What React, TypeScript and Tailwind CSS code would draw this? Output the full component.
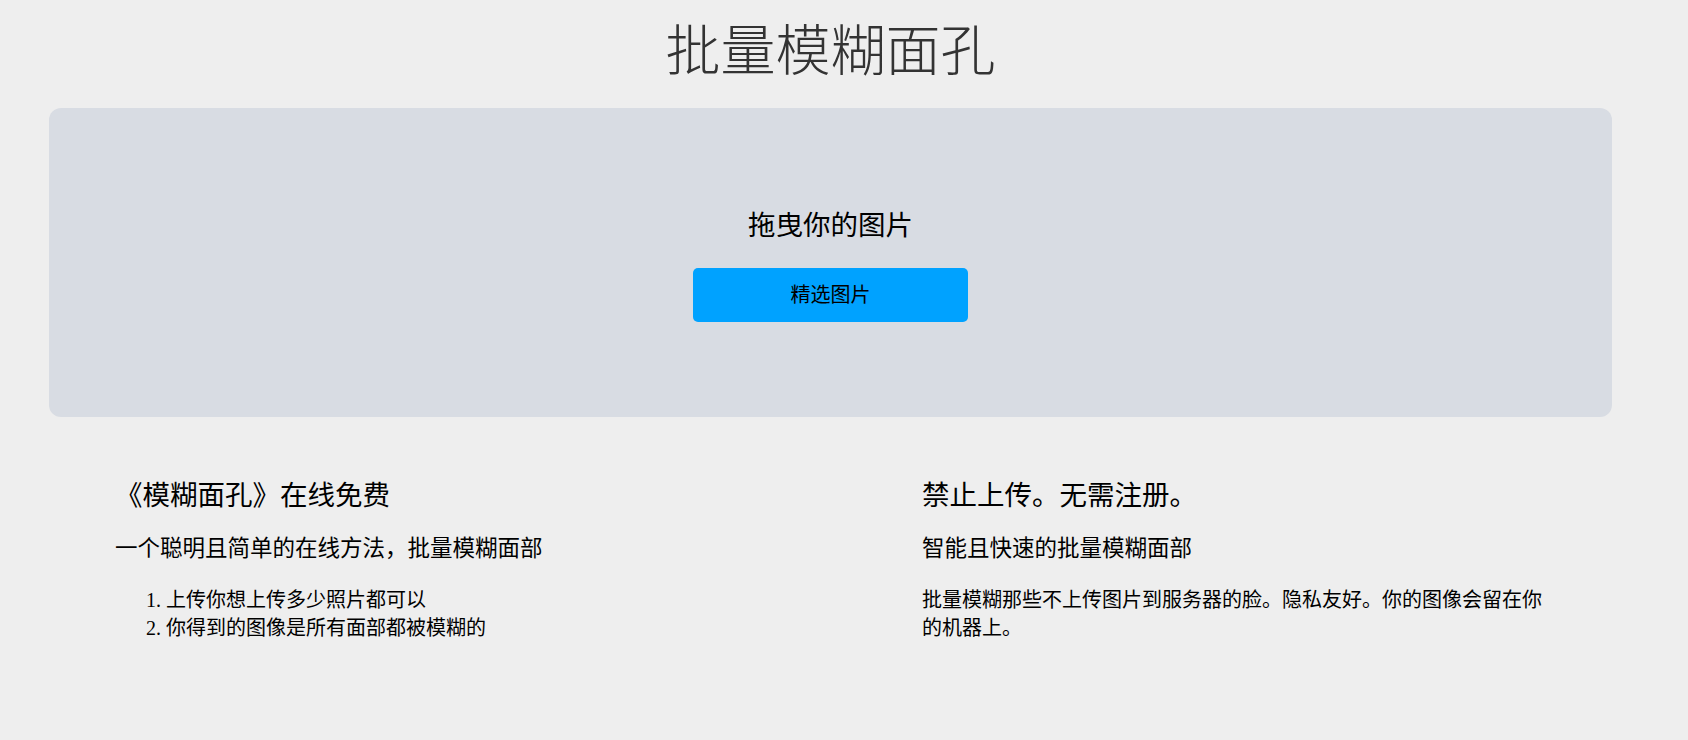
import React from 'react';

const body = '"Liberation Serif", "Noto Sans CJK SC", serif';

const App: React.FC = () => {
  return (
    <div className="min-h-[740px] w-full bg-[#eeeeee] text-black" style={{ fontFamily: body }}>
      <div className="ml-[49px] w-[1563px]">
        {/* Page title */}
        <h1
          className="pt-[13px] text-center text-[55px] font-light leading-[66px] text-[#333333]"
          style={{ fontFamily: '"Noto Sans CJK SC", sans-serif' }}
        >
          批量模糊面孔
        </h1>

        {/* Drop zone */}
        <div className="mt-[29px] flex h-[309px] flex-col items-center justify-center rounded-xl bg-[#d8dce3] pt-[6px]">
          <p className="text-[27.5px] leading-[32px]">拖曳你的图片</p>
          <button className="mt-[26px] h-[54px] w-[275px] rounded-[5px] bg-[#00a2ff] text-[20px] text-black">
            精选图片
          </button>
        </div>
      </div>

      {/* Info columns */}
      <div className="mt-[63px] flex">
        <div className="ml-[115px] w-[807px]">
          <h2 className="text-[27.5px] leading-[32px]">《模糊面孔》在线免费</h2>
          <h3 className="mt-[23px] text-[22.5px] leading-[28px]">一个聪明且简单的在线方法，批量模糊面部</h3>
          <ol className="mt-[23px] list-decimal pl-[51px] text-[20px] leading-[28px]">
            <li>上传你想上传多少照片都可以</li>
            <li>你得到的图像是所有面部都被模糊的</li>
          </ol>
        </div>
        <div className="w-[630px]">
          <h2 className="text-[27.5px] leading-[32px]">禁止上传。无需注册。</h2>
          <h3 className="mt-[23px] text-[22.5px] leading-[28px]">智能且快速的批量模糊面部</h3>
          <p className="mt-[23px] text-[20px] leading-[28px]">
            批量模糊那些不上传图片到服务器的脸。隐私友好。你的图像会留在你的机器上。
          </p>
        </div>
      </div>
    </div>
  );
};

export default App;
